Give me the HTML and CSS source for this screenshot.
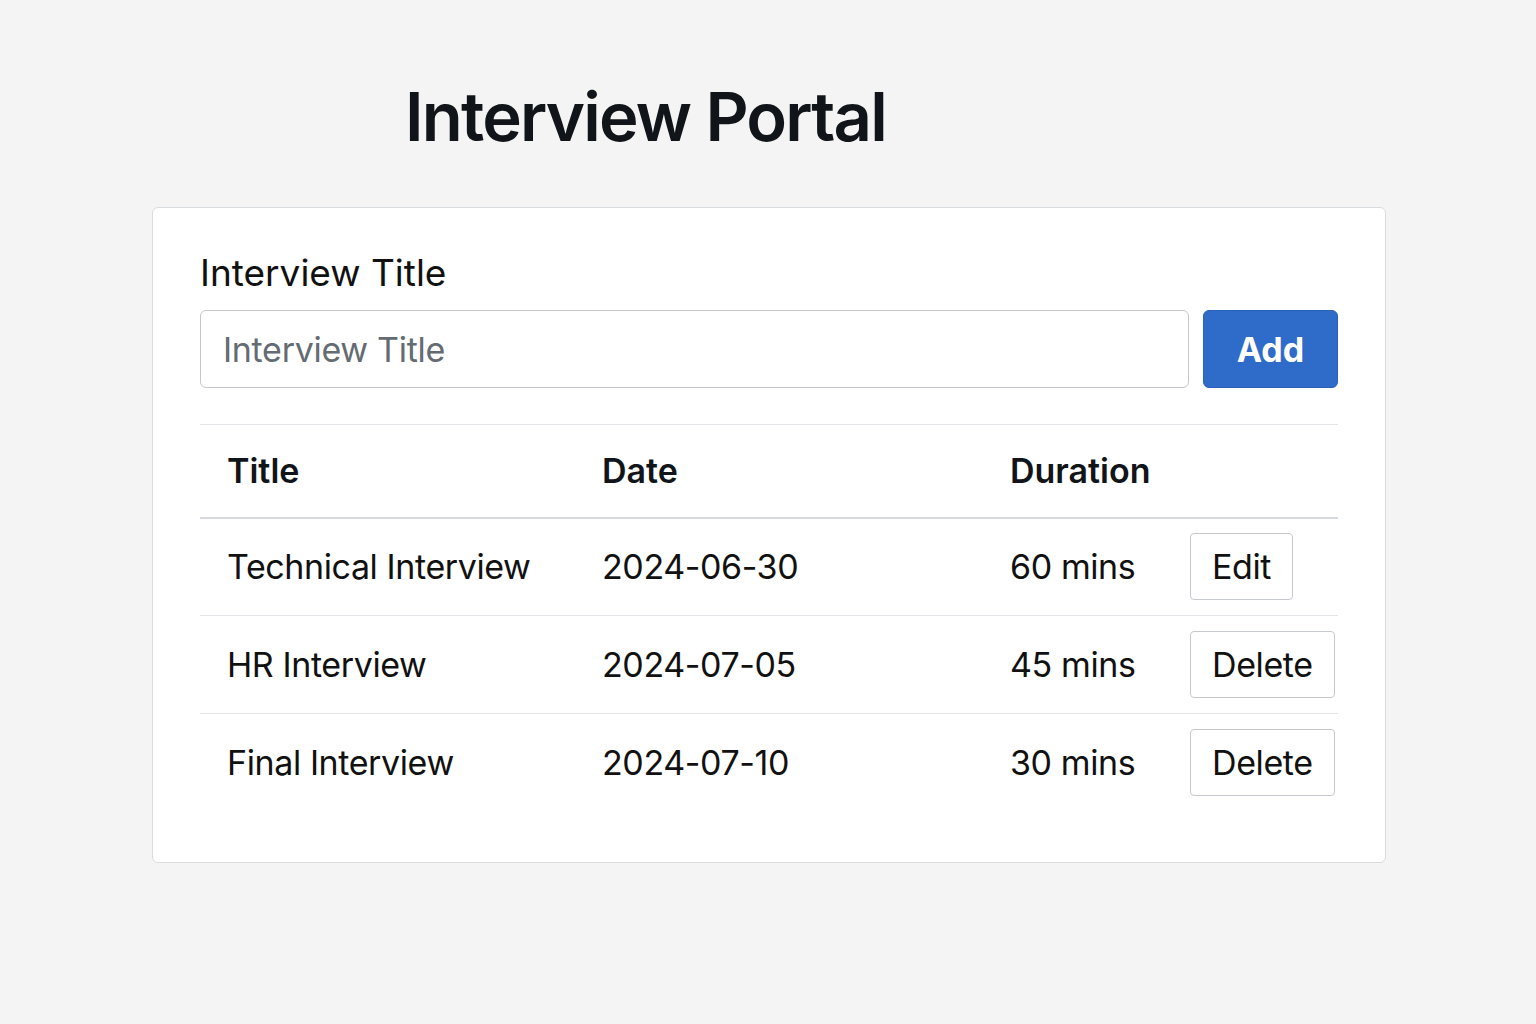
FILE: index.html
```html
<!DOCTYPE html>
<html lang="en">
<head>
<meta charset="utf-8">
<title>Interview Portal</title>
<link rel="stylesheet" href="styles.css">
</head>
<body>
<main class="page">
  <h1 class="page-title">Interview Portal</h1>
  <section class="card">
    <label class="field-label" for="title">Interview Title</label>
    <div class="form-row">
      <input id="title" class="text-input" type="text" placeholder="Interview Title">
      <button class="btn-primary" type="button">Add</button>
    </div>
    <table class="table">
      <colgroup>
        <col class="col-title">
        <col class="col-date">
        <col class="col-duration">
        <col class="col-action">
      </colgroup>
      <thead>
        <tr><th>Title</th><th>Date</th><th>Duration</th><th></th></tr>
      </thead>
      <tbody>
        <tr><td>Technical Interview</td><td>2024-06-30</td><td>60 mins</td><td class="action"><button class="btn-outline" type="button">Edit</button></td></tr>
        <tr><td>HR Interview</td><td>2024-07-05</td><td>45 mins</td><td class="action"><button class="btn-outline" type="button">Delete</button></td></tr>
        <tr><td>Final Interview</td><td>2024-07-10</td><td>30 mins</td><td class="action"><button class="btn-outline" type="button">Delete</button></td></tr>
      </tbody>
    </table>
  </section>
</main>
</body>
</html>
```
FILE: styles.css
```css
* { box-sizing: border-box; }
html, body { margin: 0; padding: 0; }
body {
  background: #f4f4f4;
  font-family: Inter, "Noto Sans", sans-serif;
  color: #111418;
}
.page {
  width: 1234px;
  margin-left: 152px;
  padding-top: 72px;
}
.page-title {
  margin: 0 0 45px 0;
  padding-left: 253px;
  font-size: 67px;
  font-weight: 600;
  line-height: 90px;
  letter-spacing: -1.8px;
  color: #111418;
}
.card {
  background: #fff;
  border: 1px solid #d9dcdf;
  border-radius: 6px;
  padding: 40px 47px 50px 47px;
}
.field-label {
  display: block;
  font-size: 37px;
  line-height: 50px;
  color: #111;
  margin-bottom: 12px;
}
.form-row {
  display: flex;
  gap: 14px;
  margin-bottom: 36px;
}
.text-input {
  flex: 1;
  height: 78px;
  border: 1px solid #c3c6ca;
  border-radius: 6px;
  padding: 0 22px;
  font-family: inherit;
  font-size: 34px;
  letter-spacing: -0.3px;
  color: #222;
  background: #fff;
}
.text-input::placeholder { color: #646b73; }
.btn-primary {
  width: 135px;
  height: 78px;
  border: 1px solid #2a62b8;
  border-radius: 6px;
  background: #2f6cc9;
  color: #fff;
  font-family: inherit;
  font-size: 34px;
  font-weight: 700;
}
.table {
  width: 100%;
  border-collapse: collapse;
  border-top: 1px solid #e3e5e8;
}
.col-title { width: 375px; }
.col-date { width: 408px; }
.col-duration { width: 207px; }
.table th, .table td {
  text-align: left;
  padding: 0 0 0 27px;
  font-size: 34px;
  white-space: nowrap;
}
.table th {
  height: 93px;
  font-weight: 600;
  border-bottom: 2px solid #d6dadf;
}
.table td {
  height: 98px;
  font-weight: 400;
  color: #111;
  letter-spacing: -0.4px;
}
.table tbody tr + tr td { border-top: 1px solid #e3e5e8; }
.table td.action { padding-left: 0; }
.btn-outline {
  height: 67px;
  padding: 0 21px;
  border: 1px solid #c6c9cd;
  border-radius: 4px;
  background: #fff;
  color: #111;
  font-family: inherit;
  font-size: 34px;
  letter-spacing: -0.4px;
}
```
